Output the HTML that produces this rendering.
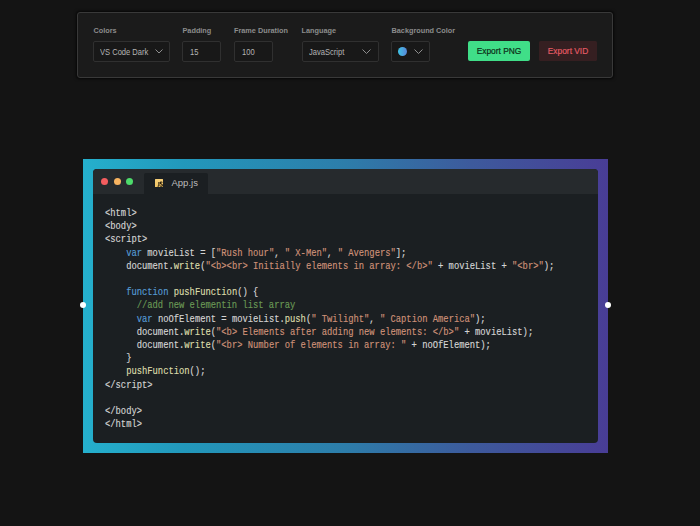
<!DOCTYPE html>
<html>
<head>
<meta charset="utf-8">
<style>
*{margin:0;padding:0;box-sizing:border-box;}
html,body{width:700px;height:526px;overflow:hidden;background:#141414;font-family:"Liberation Sans",sans-serif;}
.abs{position:absolute;}
.panel{position:absolute;left:77px;top:12px;width:536px;height:66px;background:#1b1b1b;border:1px solid #393939;border-radius:3px;box-shadow:0 0 3px 1px rgba(0,0,0,0.7);}
.lbl{position:absolute;top:25.8px;font-size:7.3px;font-weight:bold;color:#8c8c8c;white-space:nowrap;}
.box{position:absolute;top:41px;height:21px;border:1px solid #303030;border-radius:2px;background:#181818;}
.txt{position:absolute;top:47.2px;font-size:8.6px;color:#b4b4b4;white-space:nowrap;transform:scaleX(0.88);transform-origin:0 0;}
.chev{position:absolute;top:49px;}
.btn{position:absolute;top:41px;height:20px;border-radius:2px;font-size:8.4px;text-align:center;line-height:20px;white-space:nowrap;}
.frame{position:absolute;left:83px;top:159px;width:525px;height:294px;background:linear-gradient(to right,#25b0cd 0%,#2298bb 19%,#2d7daa 50%,#3d5a9c 74%,#493d96 100%);}
.win{position:absolute;left:10px;top:10px;width:505px;height:274px;background:#1b1f22;border-radius:4px;overflow:hidden;}
.hdr{position:absolute;left:0;top:0;width:505px;height:25px;background:#262a2d;}
.dot{position:absolute;top:9px;width:7px;height:7px;border-radius:50%;}
.tab{position:absolute;left:51px;top:3.5px;width:64px;height:21.5px;background:#1b1f22;border-radius:2px 2px 0 0;}
.code{position:absolute;left:12px;top:38px;-webkit-text-stroke:0.15px currentColor;font-family:"Liberation Mono",monospace;font-size:10px;transform:scaleX(0.8808);transform-origin:0 0;line-height:13.2px;color:#d4d4d4;white-space:pre;}
.k{color:#569cd6}.s{color:#ce9178}.f{color:#dcdcaa}.c{color:#6a9955}
.handle{position:absolute;width:6px;height:6px;border-radius:50%;background:#fff;}
</style>
</head>
<body>
<div class="panel"></div>
<div class="lbl" style="left:93.5px">Colors</div>
<div class="box" style="left:93px;width:77px"></div>
<div class="txt" style="left:100px">VS Code Dark</div>
<svg class="chev" style="left:155px" width="8" height="5" viewBox="0 0 8 5"><path d="M0.5 0.5 L4 4 L7.5 0.5" fill="none" stroke="#8e8e8e" stroke-width="1"/></svg>

<div class="lbl" style="left:182.5px">Padding</div>
<div class="box" style="left:182px;width:39px"></div>
<div class="txt" style="left:190px">15</div>

<div class="lbl" style="left:234px">Frame Duration</div>
<div class="box" style="left:234px;width:39px"></div>
<div class="txt" style="left:241.5px">100</div>

<div class="lbl" style="left:301.5px">Language</div>
<div class="box" style="left:302px;width:77px"></div>
<div class="txt" style="left:308.5px">JavaScript</div>
<svg class="chev" style="left:362px" width="9" height="5" viewBox="0 0 9 5"><path d="M0.5 0.5 L4.5 4.5 L8.5 0.5" fill="none" stroke="#8e8e8e" stroke-width="1"/></svg>

<div class="lbl" style="left:391.5px">Background Color</div>
<div class="box" style="left:391px;width:39px"></div>
<div class="abs" style="left:397.5px;top:46.5px;width:9.5px;height:9.5px;border-radius:50%;background:linear-gradient(to right,#3ec4e4,#5a86d8)"></div>
<svg class="chev" style="left:414px" width="9" height="5" viewBox="0 0 9 5"><path d="M0.5 0.5 L4.5 4.5 L8.5 0.5" fill="none" stroke="#8e8e8e" stroke-width="1"/></svg>

<div class="btn" style="left:468px;width:62px;background:#40de88;color:#0c2e17;-webkit-text-stroke:0.2px #0c2e17">Export PNG</div>
<div class="btn" style="left:539px;width:58px;background:#351f21;color:#e65c66;-webkit-text-stroke:0.15px #e65c66;border-radius:1.5px">Export VID</div>

<div class="frame">
  <div class="win">
    <div class="hdr">
      <div class="dot" style="left:8.1px;background:#f45d5f"></div>
      <div class="dot" style="left:20.6px;background:#f7b360"></div>
      <div class="dot" style="left:33.1px;background:#4ddb6b"></div>
      <div class="tab">
        <div class="abs" style="left:10.5px;top:6.5px;width:8.5px;height:8px;background:linear-gradient(#f7cf78,#f1c564);border-radius:0.5px"></div>
        <svg class="abs" style="left:10.5px;top:6.5px" width="8.5" height="8" viewBox="0 0 8.5 8"><path d="M3.9 3 V6.4 Q3.9 7.3 2.6 7.3" fill="none" stroke="#24190a" stroke-width="1.1"/><path d="M7.4 3.6 Q7.1 3 6.2 3 Q5.2 3 5.2 3.9 Q5.2 4.6 6.3 4.9 Q7.4 5.3 7.4 6.2 Q7.4 7.3 6.1 7.3 Q5.3 7.3 5 6.6" fill="none" stroke="#24190a" stroke-width="1.1"/></svg>
        <div class="abs" style="left:27.5px;top:4.5px;font-size:9.5px;color:#bdbdbd;">App.js</div>
      </div>
    </div>
<pre class="code">&lt;html&gt;
&lt;body&gt;
&lt;script&gt;
    <span class="k">var</span> movieList = [<span class="s">"Rush hour"</span>, <span class="s">" X-Men"</span>, <span class="s">" Avengers"</span>];
    document.<span class="f">write</span>(<span class="s">"&lt;b&gt;&lt;br&gt; Initially elements in array: &lt;/b&gt;"</span> + movieList + <span class="s">"&lt;br&gt;"</span>);

    <span class="k">function</span> <span class="f">pushFunction</span>() {
      <span class="c">//add new elementin list array</span>
      <span class="k">var</span> noOfElement = movieList.<span class="f">push</span>(<span class="s">" Twilight"</span>, <span class="s">" Caption America"</span>);
      document.<span class="f">write</span>(<span class="s">"&lt;b&gt; Elements after adding new elements: &lt;/b&gt;"</span> + movieList);
      document.<span class="f">write</span>(<span class="s">"&lt;br&gt; Number of elements in array: "</span> + noOfElement);
    }
    <span class="f">pushFunction</span>();
&lt;/script&gt;

&lt;/body&gt;
&lt;/html&gt;</pre>
  </div>
  <div class="handle" style="left:-3px;top:143.4px"></div>
  <div class="handle" style="left:521.6px;top:143.4px"></div>
</div>
</body>
</html>
